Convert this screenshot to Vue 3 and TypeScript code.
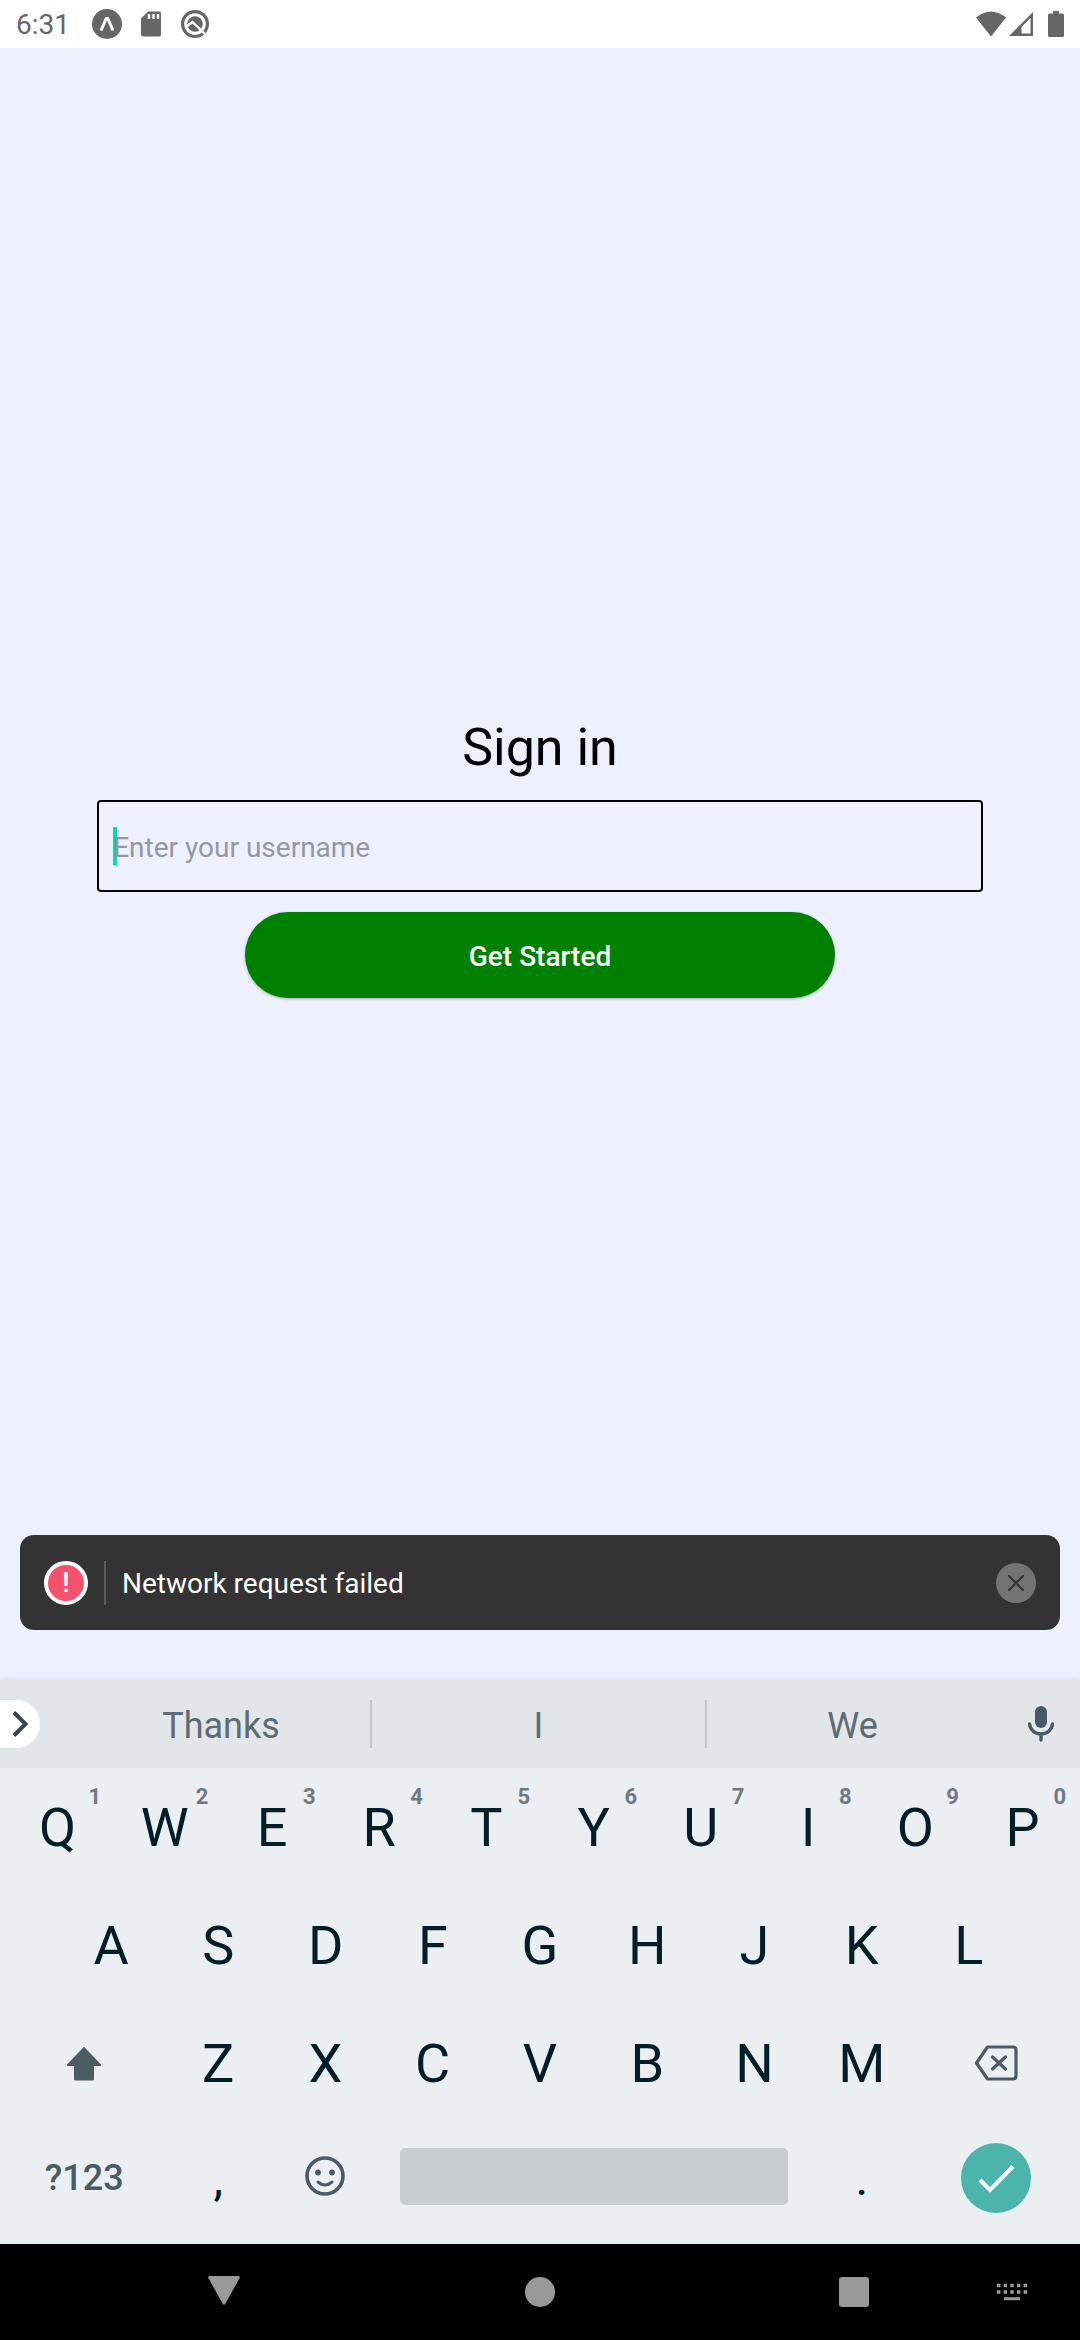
<script setup lang="ts">
import { ref } from 'vue'

interface LetterKey {
  label: string
  hint?: string
}

const username = ref('')
const toastVisible = ref(true)

const topRow: LetterKey[] = [...'QWERTYUIOP'].map((label, i) => ({
  label,
  hint: String((i + 1) % 10),
}))
const homeRow: string[] = [...'ASDFGHJKL']
const bottomRow: string[] = [...'ZXCVBNM']
const suggestions: string[] = ['Thanks', 'I', 'We']

function type(letter: string): void {
  username.value += letter
}

function erase(): void {
  username.value = username.value.slice(0, -1)
}
</script>

<template>
  <div class="screen">
    <header class="status">
      <div class="status-group">
        <span class="clock">6:31</span>
        <svg class="status-icon" viewBox="0 0 30 30" aria-hidden="true">
          <circle cx="15" cy="15" r="15" fill="#666" />
          <path d="M9 21.500 14.200 9.500h1.600L21 21.500" fill="none" stroke="#fff" stroke-width="3" stroke-linejoin="round" />
        </svg>
        <svg class="status-icon" viewBox="0 0 30 30" aria-hidden="true">
          <path d="M12 2.500h11a2 2 0 0 1 2 2v21a2 2 0 0 1-2 2H7a2 2 0 0 1-2-2V9.500z" fill="#666" />
          <path d="M13 5v5M17.500 5v5M22 5v5" stroke="#fff" stroke-width="2.400" />
        </svg>
        <svg class="status-icon" viewBox="0 0 30 30" aria-hidden="true">
          <circle cx="15" cy="15" r="12.400" fill="none" stroke="#666" stroke-width="3.200" />
          <circle cx="15" cy="15" r="7.800" fill="#666" />
          <path d="M6.500 17.500 12.500 13 27.500 27.500" fill="none" stroke="#fff" stroke-width="2.400" />
        </svg>
      </div>
      <div class="status-group system">
        <svg class="wifi" viewBox="0 0 30 26" aria-hidden="true">
          <path d="M0 6.500Q15-5.500 30 6.500L15 25.500z" fill="#666" />
        </svg>
        <svg class="signal" viewBox="0 0 26 26" aria-hidden="true">
          <path d="M25 1v24H1z" fill="#666" />
          <path d="M22.500 7v15.500h-9V16z" fill="#fff" />
        </svg>
        <svg class="battery" viewBox="0 0 16 26" aria-hidden="true">
          <path d="M5 0h6v2.500h3.500A1.500 1.500 0 0 1 16 4v20.500a1.500 1.500 0 0 1-1.500 1.500h-13A1.500 1.500 0 0 1 0 24.500V4a1.500 1.500 0 0 1 1.500-1.500H5z" fill="#666" />
        </svg>
      </div>
    </header>

    <main class="content">
      <form class="form" @submit.prevent>
        <h1 class="title">Sign in</h1>
        <div class="field">
          <span class="cursor" aria-hidden="true"></span>
          <input v-model="username" class="input" type="text" placeholder="Enter your username" aria-label="Username" />
        </div>
        <button class="submit" type="submit">Get Started</button>
      </form>

      <div v-if="toastVisible" class="toast" role="alert">
        <span class="alert-badge">!</span>
        <span class="toast-divider"></span>
        <span class="toast-text">Network request failed</span>
        <button class="dismiss" type="button" aria-label="Dismiss" @click="toastVisible = false">
          <svg viewBox="0 0 40 40" width="40" height="40">
            <path d="M13 13 27 27M27 13 13 27" stroke="#333" stroke-width="2" stroke-linecap="round" />
          </svg>
        </button>
      </div>
    </main>

    <section class="keyboard" aria-label="Keyboard">
      <div class="strip">
        <button class="expand" type="button" aria-label="More tools">
          <svg viewBox="0 0 40 48" width="40" height="48">
            <path d="M14 12.500 25.500 24 14 35.500" fill="none" stroke="#37474f" stroke-width="4" />
          </svg>
        </button>
        <div class="suggestions">
          <button v-for="word in suggestions" :key="word" class="suggestion" type="button" @click="type(word)">{{ word }}</button>
        </div>
        <button class="mic" type="button" aria-label="Voice input">
          <svg viewBox="0 0 26 36" width="26" height="36">
            <rect x="7" y="0" width="12" height="22" rx="6" fill="#455a64" />
            <path d="M1.500 18C2 24 7 28 13 28s11-4 11.500-10M13 28v6" fill="none" stroke="#455a64" stroke-width="3.400" stroke-linecap="round" />
          </svg>
        </button>
      </div>

      <div class="rows">
        <div class="row">
          <button v-for="key in topRow" :key="key.label" class="key" type="button" @click="type(key.label)">
            {{ key.label }}<span class="hint">{{ key.hint }}</span>
          </button>
        </div>
        <div class="row home">
          <button v-for="label in homeRow" :key="label" class="key" type="button" @click="type(label)">{{ label }}</button>
        </div>
        <div class="row">
          <button class="key wide" type="button" aria-label="Shift">
            <svg viewBox="0 0 36 35" width="36" height="35">
              <path d="M18 0.800 35 18.500q1 1.500-1 1.500H28v13q0 1.500-1.500 1.500h-17Q8 34.500 8 33V20H2q-2 0-1-1.500z" fill="#4a5b64" />
            </svg>
          </button>
          <button v-for="label in bottomRow" :key="label" class="key" type="button" @click="type(label)">{{ label }}</button>
          <button class="key wide" type="button" aria-label="Backspace" @click="erase">
            <svg viewBox="0 0 44 36" width="44" height="36">
              <path d="M13.500 2H39q3 0 3 3v26q0 3-3 3H13.500L2.500 18z" fill="none" stroke="#4a5b64" stroke-width="3.200" stroke-linejoin="round" />
              <path d="M18.500 12 31.500 24M31.500 12 18.500 24" stroke="#4a5b64" stroke-width="3.200" stroke-linecap="round" />
            </svg>
          </button>
        </div>
        <div class="row last">
          <button class="key wide symbols" type="button">?123</button>
          <button class="key punct" type="button" @click="type(',')">,</button>
          <button class="key" type="button" aria-label="Emoji">
            <svg viewBox="0 0 40 40" width="40" height="40">
              <circle cx="20" cy="20" r="18" fill="none" stroke="#4a5b64" stroke-width="3.600" />
              <circle cx="13" cy="16.500" r="2.900" fill="#4a5b64" />
              <circle cx="27" cy="16.500" r="2.900" fill="#4a5b64" />
              <path d="M13 26q7 6 14 0" fill="none" stroke="#4a5b64" stroke-width="3" stroke-linecap="round" />
            </svg>
          </button>
          <button class="key space" type="button" aria-label="Space" @click="type(' ')"><span class="bar"></span></button>
          <button class="key punct" type="button" @click="type('.')">.</button>
          <button class="key wide enter" type="button" aria-label="Done">
            <svg viewBox="0 0 70 70" width="70" height="70">
              <circle cx="35" cy="35" r="35" fill="#4cb5ab" />
              <path d="M19 37 29 47 52 23.500" fill="none" stroke="#fff" stroke-width="4" />
            </svg>
          </button>
        </div>
      </div>
    </section>

    <nav class="nav" aria-label="System navigation">
      <button class="nav-button back" type="button" aria-label="Back">
        <svg viewBox="0 0 32 32" width="32" height="32">
          <path d="M2 0h28q2.500 0 1.500 2.300L17.300 27.700q-1.300 2-2.600 0L.5 2.300Q-.500 0 2 0z" fill="#999" />
        </svg>
      </button>
      <button class="nav-button home-button" type="button" aria-label="Home">
        <svg viewBox="0 0 30 30" width="30" height="30"><circle cx="15" cy="15" r="15" fill="#999" /></svg>
      </button>
      <button class="nav-button recents" type="button" aria-label="Recent apps">
        <svg viewBox="0 0 30 30" width="30" height="30"><rect width="30" height="30" rx="3" fill="#999" /></svg>
      </button>
      <button class="nav-button switcher" type="button" aria-label="Switch keyboard">
        <svg viewBox="0 0 30 18" width="30" height="18">
          <path d="M0 2.500h30M0 9h30" stroke="#999" stroke-width="3.400" stroke-dasharray="3.400 3.250" />
          <path d="M7 15.700h16" stroke="#999" stroke-width="3" />
        </svg>
      </button>
    </nav>
  </div>
</template>

<style>
body {
  margin: 0;
}
</style>

<style scoped>
.screen {
  display: flex;
  flex-direction: column;
  min-height: 100vh;
  background: #edf0ff;
  font-family: Roboto, "Liberation Sans", sans-serif;
}

button {
  display: flex;
  align-items: center;
  justify-content: center;
  padding: 0;
  border: 0;
  background: none;
  font: inherit;
  color: inherit;
}

svg {
  display: block;
  flex: none;
}

.status {
  display: flex;
  align-items: center;
  justify-content: space-between;
  height: 48px;
  padding: 0 16px;
  background: #fff;
  color: #666;
}

.status-group {
  display: flex;
  align-items: center;
  gap: 14px;
}

.clock {
  width: 62px;
  padding-top: 2px;
  font-size: 28px;
  line-height: 46px;
}

.status-icon {
  width: 30px;
  height: 30px;
}

.system {
  gap: 2px;
}

.wifi {
  width: 30px;
  height: 26px;
}

.signal {
  width: 26px;
  height: 26px;
}

.battery {
  width: 16px;
  height: 26px;
  margin-left: 12px;
}

.content {
  position: relative;
  display: flex;
  flex: 1;
  flex-direction: column;
  align-items: center;
  justify-content: center;
}

.form {
  display: flex;
  flex-direction: column;
  align-items: center;
  width: 82%;
  padding-bottom: 12px;
}

.title {
  margin: 0 0 22px;
  font-size: 52px;
  font-weight: 400;
  line-height: 60px;
  color: #000;
}

.field {
  position: relative;
  width: 100%;
  margin-bottom: 20px;
}

.cursor {
  position: absolute;
  top: 27px;
  left: 16px;
  width: 4px;
  height: 38px;
  background: #00dac5;
}

.input {
  position: relative;
  display: block;
  box-sizing: border-box;
  width: 100%;
  height: 92px;
  padding: 2px 14px 0;
  border: 2px solid #000;
  border-radius: 4px;
  outline: none;
  background: transparent;
  font: 28px Roboto, "Liberation Sans", sans-serif;
  color: #000;
}

.input::placeholder {
  color: #9598a1;
  opacity: 1;
}

.submit {
  width: calc(100% * 2 / 3);
  height: 86px;
  padding-top: 2px;
  border-radius: 43px;
  background: #008000;
  box-shadow: 0 1px 3px rgba(0, 0, 0, 0.3);
  font-size: 28px;
  font-weight: 500;
  color: #fff;
}

.toast {
  position: absolute;
  right: 20px;
  bottom: 50px;
  left: 20px;
  display: flex;
  align-items: center;
  box-sizing: border-box;
  height: 95px;
  padding: 0 24px;
  border-radius: 14px;
  background: #333;
  color: #fff;
}

.alert-badge {
  display: flex;
  align-items: center;
  justify-content: center;
  box-sizing: border-box;
  width: 44px;
  height: 44px;
  border: 4px solid #fff;
  border-radius: 50%;
  background: #f5516c;
  font-size: 28px;
  font-weight: 500;
  line-height: 36px;
}

.toast-divider {
  width: 2px;
  height: 44px;
  margin: 0 16px;
  background: #5c5c5c;
}

.toast-text {
  flex: 1;
  padding-top: 2px;
  font-size: 28px;
}

.dismiss {
  width: 40px;
  height: 40px;
  border-radius: 50%;
  background: #737373;
}

.keyboard {
  background: #ebeff2;
  box-shadow: 0 -1px 6px rgba(60, 80, 160, 0.12);
}

.strip {
  display: flex;
  align-items: center;
  height: 88px;
  background: #e2e6e9;
}

.expand {
  width: 40px;
  height: 48px;
  border-radius: 0 24px 24px 0;
  background: #fff;
}

.suggestions {
  display: grid;
  flex: 1;
  grid-template-columns: 298fr 335fr 293fr;
  padding: 0 4px 0 32px;
}

.suggestion {
  height: 48px;
  padding-top: 4px;
  font-size: 36px;
  color: #5f6b72;
}

.suggestion + .suggestion {
  border-left: 2px solid #c3c7ca;
}

.mic {
  width: 78px;
  height: 48px;
}

.rows {
  padding: 0 4px 14px;
}

.row {
  display: flex;
  height: 118px;
}

.row.home {
  padding: 0 5%;
}

.row.last {
  height: 108px;
}

.key {
  position: relative;
  flex: 107 1 0;
  font-size: 54px;
  color: #041e28;
}

.key.wide {
  flex-grow: 160;
}

.key.symbols,
.key.punct,
.key.enter {
  padding-top: 4px;
}

.key.symbols {
  font-size: 36px;
  font-weight: 500;
  color: #4a5b64;
}

.key.punct {
  font-size: 48px;
}

.key.space {
  flex-grow: 428;
}

.bar {
  width: 388px;
  max-width: 92%;
  height: 57px;
  border-radius: 5px;
  background: #c8cdd0;
}

.hint {
  position: absolute;
  top: 16px;
  right: 10px;
  font-size: 22px;
  font-weight: 700;
  line-height: 26px;
  color: #6e7a80;
}

.nav {
  display: grid;
  grid-template-columns: 194fr 60fr 256fr 60fr 254fr 60fr 98fr 60fr 38fr;
  align-items: center;
  height: 96px;
  background: #000;
}

.nav-button {
  height: 60px;
}

.back {
  grid-column: 2;
}

.home-button {
  grid-column: 4;
}

.recents {
  grid-column: 6;
}

.switcher {
  grid-column: 8;
}
</style>
